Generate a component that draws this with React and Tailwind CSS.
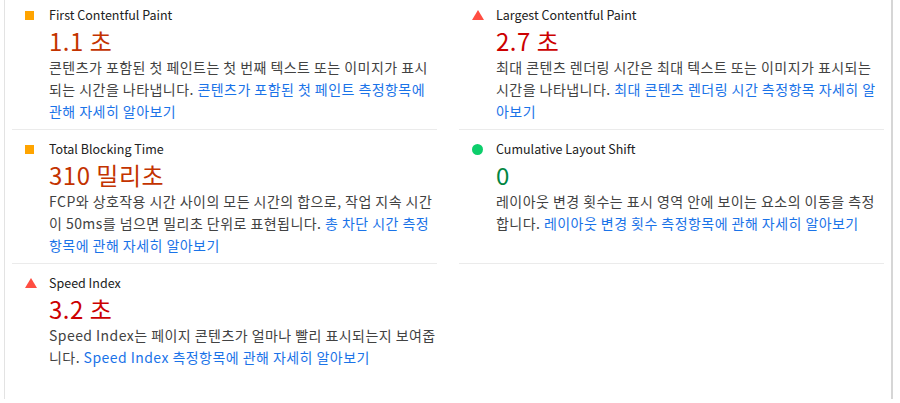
import React from "react";

const metrics = [
  {
    title: "First Contentful Paint",
    value: "1.1 초",
    rating: "average",
    text: "콘텐츠가 포함된 첫 페인트는 첫 번째 텍스트 또는 이미지가 표시되는 시간을 나타냅니다. ",
    link: "콘텐츠가 포함된 첫 페인트 측정항목에 관해 자세히 알아보기",
  },
  {
    title: "Largest Contentful Paint",
    value: "2.7 초",
    rating: "fail",
    text: "최대 콘텐츠 렌더링 시간은 최대 텍스트 또는 이미지가 표시되는 시간을 나타냅니다. ",
    link: "최대 콘텐츠 렌더링 시간 측정항목 자세히 알아보기",
  },
  {
    title: "Total Blocking Time",
    value: "310 밀리초",
    rating: "average",
    text: "FCP와 상호작용 시간 사이의 모든 시간의 합으로, 작업 지속 시간이 50ms를 넘으면 밀리초 단위로 표현됩니다. ",
    link: "총 차단 시간 측정항목에 관해 자세히 알아보기",
  },
  {
    title: "Cumulative Layout Shift",
    value: "0",
    rating: "pass",
    text: "레이아웃 변경 횟수는 표시 영역 안에 보이는 요소의 이동을 측정합니다. ",
    link: "레이아웃 변경 횟수 측정항목에 관해 자세히 알아보기",
  },
  {
    title: "Speed Index",
    value: "3.2 초",
    rating: "fail",
    text: "Speed Index는 페이지 콘텐츠가 얼마나 빨리 표시되는지 보여줍니다. ",
    link: "Speed Index 측정항목에 관해 자세히 알아보기",
  },
];

const valueColor = {
  average: "text-[#c33300]",
  fail: "text-[#cc0000]",
  pass: "text-[#018642]",
};

function ScoreIcon({ rating }) {
  if (rating === "average") {
    return <span className="block w-[9px] h-[9px] bg-[#ffa400]" />;
  }
  if (rating === "pass") {
    return <span className="block w-[11px] h-[11px] rounded-full bg-[#0cce6b]" />;
  }
  return (
    <svg width="12" height="10" viewBox="0 0 12 10" className="block">
      <polygon points="6,0 12,10 0,10" fill="#ff4e42" />
    </svg>
  );
}

function Metric({ m, last }) {
  return (
    <div className={`flex pt-[9px] pb-[7px] ${last ? "" : "border-b border-[#ebebeb]"}`}>
      <div className="w-[37px] shrink-0 pl-[13px] h-[20px] flex items-center">
        <ScoreIcon rating={m.rating} />
      </div>
      <div className="min-w-0 flex-1">
        <div className="text-[12.5px] leading-[20px] text-[#212121]">{m.title}</div>
        <div className={`mt-[1px] text-[24px] leading-[30px] tracking-[0.5px] ${valueColor[m.rating]}`}>
          {m.value}
        </div>
        <p className="text-[14px] leading-[22px] tracking-[0.45px] text-[#424242]">
          {m.text}
          <a className="text-[#1a73e8]">{m.link}</a>
        </p>
      </div>
    </div>
  );
}

export default function App() {
  return (
    <div
      className="w-[900px] h-[403px] overflow-hidden bg-white pl-[4px]"
      style={{ fontFamily: '"Noto Sans CJK KR", "Noto Sans", sans-serif' }}
    >
      <div className="w-[889px] h-full border-l border-[#e3e3e3] border-r-2 border-r-[#d6d6d6] px-[7px]">
        <div className="-mt-[4px] grid grid-cols-2 gap-x-[22px] auto-rows-[134px]">
          {metrics.map((m, i) => (
            <Metric key={m.title} m={m} last={i === 4} />
          ))}
        </div>
      </div>
    </div>
  );
}
